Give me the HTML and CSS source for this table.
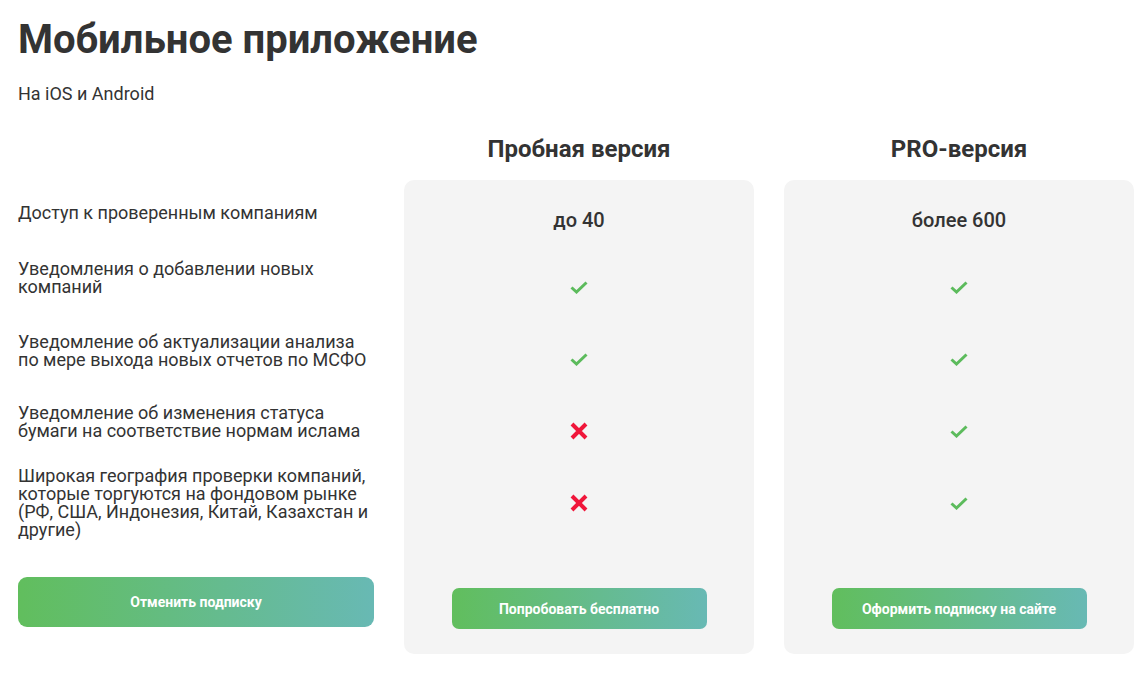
FILE: index.html
```html
<!DOCTYPE html>
<html lang="ru">
<head>
<meta charset="utf-8">
<title>Мобильное приложение</title>
<link rel="stylesheet" href="styles.css">
</head>
<body>
<main class="page">
  <h1 class="title">Мобильное приложение</h1>
  <p class="subtitle">На iOS и Android</p>

  <section class="compare">
    <div class="col-head col-head--empty"></div>
    <h2 class="col-head">Пробная версия</h2>
    <h2 class="col-head">PRO-версия</h2>

    <div class="features">
      <ul class="feature-list">
        <li class="feature">Доступ к проверенным компаниям</li>
        <li class="feature">Уведомления о добавлении новых<br>компаний</li>
        <li class="feature">Уведомление об актуализации анализа<br>по мере выхода новых отчетов по МСФО</li>
        <li class="feature">Уведомление об изменения статуса<br>бумаги на соответствие нормам ислама</li>
        <li class="feature">Широкая география проверки компаний,<br>которые торгуются на фондовом рынке<br>(РФ, США, Индонезия, Китай, Казахстан и<br>другие)</li>
      </ul>
      <button class="btn btn--wide" type="button">Отменить подписку</button>
    </div>

    <div class="plan">
      <div class="plan-value">до 40</div>
      <div class="cell"><svg class="ic-yes" viewBox="0 0 18 13"><polyline points="1.5,6.5 6.5,11 16.5,1.5"/></svg></div>
      <div class="cell"><svg class="ic-yes" viewBox="0 0 18 13"><polyline points="1.5,6.5 6.5,11 16.5,1.5"/></svg></div>
      <div class="cell"><svg class="ic-no" viewBox="0 0 20 20"><path d="M3 3L17 17M17 3L3 17"/></svg></div>
      <div class="cell"><svg class="ic-no" viewBox="0 0 20 20"><path d="M3 3L17 17M17 3L3 17"/></svg></div>
      <button class="btn btn--plan" type="button">Попробовать бесплатно</button>
    </div>

    <div class="plan">
      <div class="plan-value">более 600</div>
      <div class="cell"><svg class="ic-yes" viewBox="0 0 18 13"><polyline points="1.5,6.5 6.5,11 16.5,1.5"/></svg></div>
      <div class="cell"><svg class="ic-yes" viewBox="0 0 18 13"><polyline points="1.5,6.5 6.5,11 16.5,1.5"/></svg></div>
      <div class="cell"><svg class="ic-yes" viewBox="0 0 18 13"><polyline points="1.5,6.5 6.5,11 16.5,1.5"/></svg></div>
      <div class="cell"><svg class="ic-yes" viewBox="0 0 18 13"><polyline points="1.5,6.5 6.5,11 16.5,1.5"/></svg></div>
      <button class="btn btn--plan" type="button">Оформить подписку на сайте</button>
    </div>
  </section>
</main>
</body>
</html>
```

FILE: styles.css
```css
* { box-sizing: border-box; }

html, body {
  margin: 0;
  padding: 0;
  background: #ffffff;
}

body {
  font-family: Roboto, "Noto Sans", "Liberation Sans", sans-serif;
  color: #333333;
}

.page {
  padding: 16px 8px 0 18px;
}

.title {
  margin: 0;
  font-size: 40px;
  font-weight: 700;
  line-height: 47px;
  color: #333333;
}

.subtitle {
  margin: 20px 0 0;
  font-size: 18px;
  line-height: 21px;
  color: #333333;
}

.compare {
  display: grid;
  grid-template-columns: 356px 350px 350px;
  column-gap: 30px;
  margin-top: 31px;
}

.col-head {
  margin: 0 0 17px;
  font-size: 24px;
  font-weight: 700;
  line-height: 28px;
  text-align: center;
  color: #333333;
}

.features {
  display: flex;
  flex-direction: column;
}

.feature-list {
  list-style: none;
  margin: 0;
  padding: 24px 0 0;
  display: grid;
  grid-template-rows: 56px 73px 71px 63px auto;
}

.feature {
  font-size: 18px;
  line-height: 18px;
  color: #333333;
}

.plan {
  background: #f4f4f4;
  border-radius: 10px;
  padding: 22px 0 25px;
  display: flex;
  flex-direction: column;
  align-items: center;
}

.plan-value {
  height: 36px;
  line-height: 36px;
  font-size: 20px;
  font-weight: 500;
  color: #333333;
  margin-bottom: 13px;
}

.cell {
  height: 72px;
  width: 100%;
  display: flex;
  align-items: center;
  justify-content: center;
}

.ic-yes {
  width: 18px;
  height: 13px;
  fill: none;
  stroke: #5cbb5c;
  stroke-width: 3;
}

.ic-no {
  width: 20px;
  height: 20px;
  fill: none;
  stroke: #f0163a;
  stroke-width: 4;
}

.btn {
  border: 0;
  color: #ffffff;
  font-family: Roboto, "Noto Sans", "Liberation Sans", sans-serif;
  font-weight: 700;
  font-size: 14px;
  background: linear-gradient(90deg, #61be5d 0%, #68b9b4 100%);
  cursor: pointer;
}

.btn--wide {
  margin-top: 38px;
  height: 50px;
  width: 100%;
  border-radius: 9px;
}

.btn--plan {
  margin-top: 49px;
  width: 255px;
  height: 41px;
  border-radius: 7px;
}
```
